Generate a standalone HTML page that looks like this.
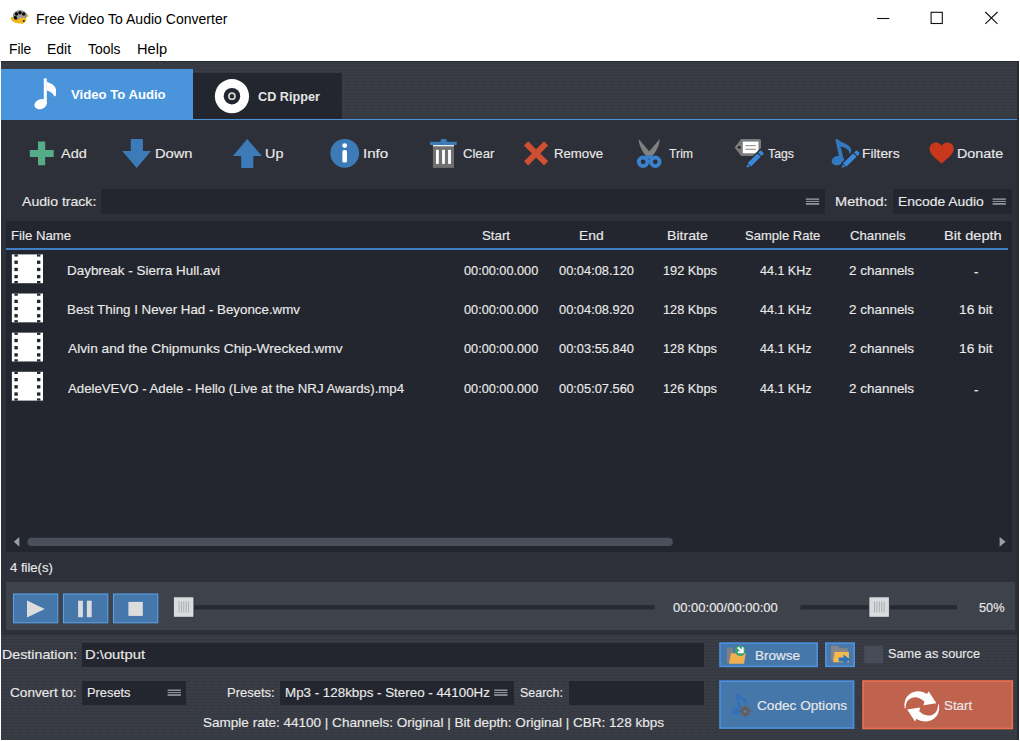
<!DOCTYPE html>
<html><head><meta charset="utf-8"><title>Free Video To Audio Converter</title>
<style>
html,body{margin:0;padding:0;}
body{width:1020px;height:741px;position:relative;overflow:hidden;background:#fff;font-family:"Liberation Sans",sans-serif;}
.a{position:absolute;}
.t{-webkit-text-stroke:0.15px;position:absolute;white-space:pre;line-height:1;transform-origin:0 0;font-family:"Liberation Sans",sans-serif;}
svg{position:absolute;overflow:visible;}
.box{position:absolute;background:#23262e;}
.btn{position:absolute;background:#4577ab;border:1px solid #5a9be0;box-sizing:border-box;}
</style></head><body>
<!-- app dark background with pattern colour -->
<div class="a" id="app" style="left:1px;top:61px;width:1018px;height:678.5px;background:#34373f;"></div>
<svg width="1018" height="679" style="left:1px;top:61px;"><defs><pattern id="wv" width="8" height="3" patternUnits="userSpaceOnUse"><path d="M-1 2.2Q1 2.2 2 1.2T4 0.4T6 1.2T9 2.2" fill="none" stroke="#3c4048" stroke-width="1.1"/></pattern></defs><rect width="1018" height="679" fill="url(#wv)"/><rect width="1018" height="1" fill="#262930"/></svg>
<!-- main panel -->
<div class="a" style="left:1px;top:120px;width:1018px;height:514.5px;background:#2d3038;"></div>
<!-- tabs -->
<div class="a" style="left:1px;top:69px;width:191.5px;height:51px;background:#4a94dc;"></div>
<div class="a" style="left:192.5px;top:73px;width:149.5px;height:46px;background:#23262e;"></div>
<div class="a" style="left:1px;top:119px;width:1018px;height:1.2px;background:#4a94dc;"></div>
<!-- audio track / method boxes -->
<div class="box" style="left:101px;top:189px;width:724px;height:25px;"></div>
<div class="box" style="left:893px;top:189px;width:118.5px;height:25px;"></div>
<!-- list -->
<div class="a" style="left:6px;top:221px;width:1006px;height:331px;background:#23262e;"></div>
<div class="a" style="left:6px;top:248.2px;width:1002px;height:1.8px;background:#3f80c4;"></div>
<!-- player panel -->
<div class="a" style="left:6px;top:581.5px;width:1009px;height:48.7px;background:#3d424b;"></div>
<div class="a" style="left:1016.7px;top:61px;width:2.3px;height:678.5px;background:#292c33;"></div>
<!-- bottom boxes -->
<div class="box" style="left:82px;top:642.5px;width:621.7px;height:24px;"></div>
<div class="box" style="left:82px;top:680.5px;width:104.3px;height:24.3px;"></div>
<div class="box" style="left:279.5px;top:680.5px;width:234px;height:24.3px;"></div>
<div class="box" style="left:568.5px;top:680.5px;width:135.2px;height:24.3px;"></div>
<svg width="1020" height="741" viewBox="0 0 1020 741" style="left:0;top:0;">
<!-- title icon -->
<g>
 <path d="M10.8 17.2 C10.5 21.5 16 24 21.5 23.3 L22 24.3 L26.3 20.8 L22.3 18.6 L22.2 19.8 C18 20.3 13.5 19.5 12 16.5 Z" fill="#f2b81c"/>
 <path d="M26.5 13.5 C28.5 14 29.3 15.5 28.3 17.2 L26.8 16.6 Z" fill="#f6cf55"/>
 <ellipse cx="19.9" cy="15.6" rx="6.9" ry="5" fill="#5e5e5e"/>
 <ellipse cx="19.9" cy="14.8" rx="6.5" ry="4.2" fill="#9c9c9c"/>
 <circle cx="16.5" cy="14" r="1.75" fill="#0a0a0a"/><circle cx="20" cy="12.7" r="1.75" fill="#0a0a0a"/><circle cx="23.7" cy="14" r="1.75" fill="#0a0a0a"/><circle cx="15.4" cy="17.7" r="1.75" fill="#0a0a0a"/>
 <path d="M17 19.5 C19 18, 23 17.3, 26 17.5 L26.3 20.8 L22 24.3 L21.5 23.3 C19 23.3 17.5 22 17 19.5Z" fill="#f2b81c"/>
 <circle cx="23.8" cy="21" r="1.1" fill="#1c2a50"/>
</g>
<!-- window controls -->
<g stroke="#111" stroke-width="1.1" fill="none">
 <path d="M877 18.5H889.3"/>
 <rect x="931.1" y="12.3" width="11.2" height="11.2"/>
 <path d="M985.3 12 L997.5 23.8 M997.5 12 L985.3 23.8"/>
</g>
<!-- tab note -->
<g fill="#fff">
 <rect x="43.8" y="78.3" width="3" height="26" rx="1"/>
 <ellipse cx="40.6" cy="104.2" rx="6.4" ry="4.9" transform="rotate(-22 40.6 104.2)"/>
 <path d="M46.7 81.6 C50 83.6 55 84.6 56 89.5 L56 95 C55.6 96.6 54.4 96.6 53.8 95.4 C52.8 93 50 91.6 46.7 90.6 Z"/>
</g>
<!-- cd icon -->
<circle cx="231.95" cy="96.2" r="17.1" fill="#fff"/>
<circle cx="231.95" cy="96.2" r="8.25" fill="#23262e"/>
<circle cx="231.95" cy="96.2" r="3.05" fill="none" stroke="#d2d2d2" stroke-width="1.7"/>
<!-- plus -->
<path d="M38 141.5h7.2v8.5h8.5v7.1h-8.5v8.2h-7.2v-8.2h-8.2v-7.1h8.2z" fill="#55ad88"/>
<!-- down -->
<path d="M130.8 139H142.9V151H151.1L136.7 168.1L122.2 151H130.8Z" fill="#3d7ab8"/>
<!-- up -->
<path d="M247.2 138.9L261.9 155.9H253.3V168H241.2V155.9H232.9Z" fill="#3d7ab8"/>
<!-- info -->
<circle cx="344.75" cy="153.3" r="14.4" fill="#3d7ab8"/>
<circle cx="344.7" cy="145.6" r="2.4" fill="#fff"/>
<rect x="342.4" y="149.9" width="4.6" height="12.7" rx="1.6" fill="#fff"/>
<!-- trash -->
<g>
 <path d="M440.2 141.8L441.4 139H446L447.2 141.8H456.8V145.1H430V141.8Z" fill="#3d7ab8"/>
 <rect x="432.9" y="145.1" width="21.1" height="1.5" fill="#fff"/>
 <rect x="432.9" y="146.6" width="21.1" height="21.3" fill="#707070"/>
 <rect x="436" y="149.8" width="2.8" height="14.1" fill="#fff"/><rect x="442.1" y="149.8" width="2.8" height="14.1" fill="#fff"/><rect x="448.1" y="149.8" width="2.8" height="14.1" fill="#fff"/>
</g>
<!-- remove X -->
<path transform="translate(536.1 153.4)" d="M-12.1 -7.9L-7.9 -12.1L0 -4.2L7.9 -12.1L12.1 -7.9L4.2 0L12.1 7.9L7.9 12.1L0 4.2L-7.9 12.1L-12.1 7.9L-4.2 0Z" fill="#cf4f32"/>
<!-- scissors -->
<path d="M638.6 139.1C643 144 647 149 649.2 151.5C651.5 149 655.5 144 659.7 139.1C659.5 146 656 152 652.5 155.8H645.8C642.5 152 639 146 638.6 139.1Z" fill="#808080"/>
<circle cx="643.1" cy="161.8" r="4.3" fill="none" stroke="#3a82cc" stroke-width="3.8"/>
<circle cx="655.3" cy="161.8" r="4.3" fill="none" stroke="#3a82cc" stroke-width="3.8"/>
<rect x="646" y="155.2" width="6.4" height="3.5" fill="#3a82cc"/>
<!-- tags -->
<g>
 <path d="M741.1 139.1H759.5Q761 139.1 761 140.6V154.4Q761 155.9 759.5 155.9H741.1L734.6 147.5Z" fill="#7a7a7a"/>
 <circle cx="739.3" cy="147.4" r="1.4" fill="#1d2026"/>
 <rect x="742.8" y="141.6" width="15.7" height="11.7" fill="#fff"/>
 <rect x="745.4" y="145" width="10.5" height="1.2" fill="#9a9a9a"/><rect x="745.4" y="148.7" width="10.5" height="1.2" fill="#9a9a9a"/>
 <g transform="translate(746.5 167.5) rotate(-44.6)">
  <path d="M-0.5 0L3.2 -2.6H22.3V2.6H3.2Z" fill="#2d3038" stroke="#2d3038" stroke-width="2.4"/>
  <path d="M0 0L3.2 -1.8V1.8Z" fill="#3a86d8"/>
  <rect x="4" y="-2.4" width="13.6" height="4.8" fill="#3a86d8"/>
  <path d="M18.7 -2.4H21Q22.4 -2.4 22.4 -1V1Q22.4 2.4 21 2.4H18.7Z" fill="#3a86d8"/>
 </g>
</g>
<!-- filters -->
<g>
 <g fill="#3478c0">
  <ellipse cx="837.9" cy="160.6" rx="6.3" ry="4.6" transform="rotate(-12 837.9 160.6)"/>
  <path d="M835.3 139.6C836 138.7 837.6 138.8 838.4 139.8C841 143 848 143.5 850.6 148C851.8 150.3 851.3 152.6 849.6 154.2C850 150.5 845.5 147.6 840.6 146.6L843.9 160.6L840.2 161.4Z"/>
 </g>
 <g transform="translate(841.7 167.7) rotate(-43.6)">
  <path d="M-0.5 0L3.2 -2.6H23V2.6H3.2Z" fill="#2d3038" stroke="#2d3038" stroke-width="2.4"/>
  <path d="M0 0L3.2 -1.8V1.8Z" fill="#3a86d8"/>
  <rect x="4" y="-2.4" width="14.3" height="4.8" fill="#3a86d8"/>
  <path d="M19.4 -2.4H21.7Q23.1 -2.4 23.1 -1V1Q23.1 2.4 21.7 2.4H19.4Z" fill="#3a86d8"/>
 </g>
</g>
<!-- heart -->
<path d="M941.6 163.4C935 158 929.6 154 929.6 148.8C929.6 145 932.5 142.6 935.8 142.6C938.5 142.6 940.5 144 941.6 145.8C942.7 144 944.7 142.6 947.5 142.6C950.8 142.6 953.7 145 953.7 148.8C953.7 154 948.2 158 941.6 163.4Z" fill="#c9381c"/>
<!-- hamburgers -->
<defs><g id="hb"><rect x="0" y="0" width="13.3" height="1.5"/><rect x="0" y="2.5" width="13.3" height="1.1"/><rect x="0" y="4.6" width="13.3" height="1.8"/></g></defs>
<g fill="#8e929b">
 <use href="#hb" x="805.9" y="198.4"/><use href="#hb" x="992.6" y="198.4"/>
 <use href="#hb" x="167.6" y="689.5"/><use href="#hb" x="494.2" y="689.5"/>
</g>
<!-- film icons -->
<defs><g id="film">
 <rect x="11.9" y="254.4" width="31.1" height="28.8" fill="#fff"/>
 <g fill="#23262e">
  <rect x="14.4" y="254.4" width="3.4" height="2.2"/><rect x="14.4" y="260.6" width="3.4" height="3.3"/><rect x="14.4" y="267.8" width="3.4" height="3.3"/><rect x="14.4" y="275" width="3.4" height="3.3"/><rect x="14.4" y="281" width="3.4" height="2.2"/>
  <rect x="37" y="254.4" width="3.4" height="2.2"/><rect x="37" y="260.6" width="3.4" height="3.3"/><rect x="37" y="267.8" width="3.4" height="3.3"/><rect x="37" y="275" width="3.4" height="3.3"/><rect x="37" y="281" width="3.4" height="2.2"/>
 </g></g></defs>
<use href="#film"/><use href="#film" y="39.13"/><use href="#film" y="78.26"/><use href="#film" y="117.4"/>
<!-- scrollbar -->
<path d="M19.3 536.9V546.7L13.9 541.8Z" fill="#9aa0aa"/>
<path d="M999.6 536.9V546.7L1005.6 541.8Z" fill="#9aa0aa"/>
<rect x="27.5" y="537.8" width="645.3" height="8.2" rx="4.1" fill="#4a505b"/>
<!-- player -->
<g>
 <rect x="13.5" y="594" width="44.3" height="28.8" fill="#4577ab" stroke="#58a0e8" stroke-width="1.1"/>
 <rect x="63.5" y="594" width="44.3" height="28.8" fill="#4577ab" stroke="#58a0e8" stroke-width="1.1"/>
 <rect x="113.5" y="594" width="44.3" height="28.8" fill="#4577ab" stroke="#58a0e8" stroke-width="1.1"/>
 <path d="M27 600.5V617.5L44.8 609Z" fill="#dcdcdc"/>
 <rect x="78.1" y="600.7" width="4.8" height="16.5" fill="#dcdcdc"/><rect x="86.9" y="600.7" width="4.8" height="16.5" fill="#dcdcdc"/>
 <rect x="128.4" y="601.9" width="14.4" height="14" fill="#dcdcdc"/>
 <rect x="190" y="605.2" width="464.8" height="4.2" fill="#272a31"/>
 <rect x="800.5" y="605.2" width="156.5" height="4.2" fill="#272a31"/>
 <g id="thumb">
  <rect x="173.4" y="596.8" width="20.5" height="20.5" rx="1" fill="#d9dcde" stroke="#2a2d34" stroke-width="0.8"/>
  <path d="M179 601.5V612.5M181.4 601.5V612.5M183.8 601.5V612.5M186.2 601.5V612.5M188.6 601.5V612.5" stroke="#a9adb2" stroke-width="1"/>
 </g>
 <use href="#thumb" x="695.5"/>
</g>
<!-- browse / buttons -->
<rect x="720.05" y="643.15" width="97.1" height="23.2" fill="#4577ab" stroke="#4a90dc" stroke-width="1.7"/>
<rect x="825.85" y="643.15" width="28.3" height="23.2" fill="#4a78a8" stroke="#4a90dc" stroke-width="1.7"/>
<rect x="720.05" y="681.15" width="133.5" height="46.9" fill="#4577ab" stroke="#4a90dc" stroke-width="1.7"/>
<rect x="863" y="681" width="149.3" height="47.5" fill="#c0634e" stroke="#ee6e4e" stroke-width="1.6"/>
<rect x="864.2" y="645.8" width="18.8" height="17.6" fill="#474c57"/>
<!-- browse icon -->
<g>
 <path d="M726.6 648.6Q726.6 647.4 727.8 647.4H732.9V663.1H726.6Z" fill="#7b7f86"/>
 <path d="M731 653.3H745.8L744 663.7H728.9Z" fill="#f0b050"/>
 <circle cx="740.2" cy="650.8" r="5.3" fill="#3da070"/>
 <path d="M737.4 648L738.6 646.9L742 650.2V647.6L743.4 647.6V653H738V651.6H740.8Z" fill="#fff" stroke="#fff" stroke-width="0.5"/>
</g>
<!-- open folder icon -->
<g>
 <path d="M831.1 647Q831.1 645.8 832.3 645.8H838L839.8 648.3H847.8V660H831.1Z" fill="#878787"/>
 <path d="M834.7 652H848.9V662.3H832.9Z" fill="#f5b94f"/>
 <path d="M838.7 657.6H843.5V654.6L850.3 659.6L843.5 664.6V661.6H838.7Z" fill="#2f72b8"/>
</g>
<!-- codec icon -->
<g>
 <g fill="#3470b8">
  <ellipse cx="736.8" cy="711.3" rx="4.7" ry="3.4" transform="rotate(-12 736.8 711.3)"/>
  <path d="M735.2 694C735.8 693.2 737 693.3 737.6 694.1C739.5 696.5 744.8 697 746.8 700.3C747.7 702 747.3 703.8 746 705C746.3 702.2 743 700 739.2 699.2L741.4 711L738.6 711.6Z"/>
 </g>
 <circle cx="745.3" cy="711.3" r="3.1" fill="none" stroke="#6b5a52" stroke-width="1.8"/>
 <path d="M745.3 705.6V717M739.6 711.3H751M741.3 707.3L749.3 715.3M749.3 707.3L741.3 715.3" stroke="#6b5a52" stroke-width="1.6" fill="none"/>
 <circle cx="745.3" cy="711.3" r="1.6" fill="#4a7fc0"/>
</g>
<!-- start icon -->
<defs><path id="sw" d="M904.8 708.6C903.8 704 905 699.5 907 696.8C909.5 693.5 913.5 691.5 917.6 691.3C921 691.2 924.5 692.4 927.1 694.1L928.6 691.2L936.4 703.3L923.4 705.2L924.4 701.5C922 699.3 919 697.4 915.8 697.2C912.5 697.1 909.8 698.5 907.8 700.6C906.3 702.5 905.6 705.5 905.5 708.6Z"/></defs>
<use href="#sw" fill="#fff"/>
<use href="#sw" fill="#fff" transform="rotate(180 921.8 706.4)"/>
</svg>

<span class="t" style="left:35.60px;top:11.0px;font-size:15px;transform:scaleX(0.9356);color:#000;-webkit-text-stroke:0;">Free Video To Audio Converter</span>
<span class="t" style="left:9.00px;top:41.0px;font-size:15px;transform:scaleX(0.9197);color:#000;-webkit-text-stroke:0;">File</span>
<span class="t" style="left:47.20px;top:41.0px;font-size:15px;transform:scaleX(0.9299);color:#000;-webkit-text-stroke:0;">Edit</span>
<span class="t" style="left:88.00px;top:41.0px;font-size:15px;transform:scaleX(0.9280);color:#000;-webkit-text-stroke:0;">Tools</span>
<span class="t" style="left:137.00px;top:41.0px;font-size:15px;transform:scaleX(0.9733);color:#000;-webkit-text-stroke:0;">Help</span>
<span class="t" style="left:71.00px;top:88.0px;font-size:13px;transform:scaleX(1.0103);color:#fff;font-weight:700;-webkit-text-stroke:0;">Video To Audio</span>
<span class="t" style="left:258.00px;top:90.0px;font-size:13px;transform:scaleX(0.9754);color:#e4e4e4;font-weight:700;-webkit-text-stroke:0;">CD Ripper</span>
<span class="t" style="left:60.80px;top:146.8px;font-size:13.4px;transform:scaleX(1.0798);color:#e9e9e9;">Add</span>
<span class="t" style="left:155.00px;top:146.8px;font-size:13.4px;transform:scaleX(1.0963);color:#e9e9e9;">Down</span>
<span class="t" style="left:265.40px;top:146.8px;font-size:13.4px;transform:scaleX(1.0735);color:#e9e9e9;">Up</span>
<span class="t" style="left:363.00px;top:146.8px;font-size:13.4px;transform:scaleX(1.1262);color:#e9e9e9;">Info</span>
<span class="t" style="left:463.20px;top:146.8px;font-size:13.4px;transform:scaleX(0.9782);color:#e9e9e9;">Clear</span>
<span class="t" style="left:554.40px;top:146.8px;font-size:13.4px;transform:scaleX(0.9851);color:#e9e9e9;">Remove</span>
<span class="t" style="left:668.60px;top:146.8px;font-size:13.4px;transform:scaleX(0.9176);color:#e9e9e9;">Trim</span>
<span class="t" style="left:768.20px;top:146.8px;font-size:13.4px;transform:scaleX(0.9158);color:#e9e9e9;">Tags</span>
<span class="t" style="left:861.80px;top:146.8px;font-size:13.4px;transform:scaleX(1.0301);color:#e9e9e9;">Filters</span>
<span class="t" style="left:957.00px;top:146.8px;font-size:13.4px;transform:scaleX(1.0682);color:#e9e9e9;">Donate</span>
<span class="t" style="left:22.20px;top:194.8px;font-size:13.4px;transform:scaleX(1.0509);color:#e9e9e9;">Audio track:</span>
<span class="t" style="left:834.80px;top:194.8px;font-size:13.4px;transform:scaleX(1.0886);color:#e9e9e9;">Method:</span>
<span class="t" style="left:897.80px;top:194.8px;font-size:13.4px;transform:scaleX(1.0382);color:#e9e9e9;">Encode Audio</span>
<span class="t" style="left:10.80px;top:228.8px;font-size:13.4px;transform:scaleX(0.9852);color:#e9e9e9;">File Name</span>
<span class="t" style="left:481.80px;top:228.8px;font-size:13.4px;transform:scaleX(0.9913);color:#e9e9e9;">Start</span>
<span class="t" style="left:579.40px;top:228.8px;font-size:13.4px;transform:scaleX(1.0357);color:#e9e9e9;">End</span>
<span class="t" style="left:666.60px;top:228.8px;font-size:13.4px;transform:scaleX(1.0549);color:#e9e9e9;">Bitrate</span>
<span class="t" style="left:744.60px;top:228.8px;font-size:13.4px;transform:scaleX(0.9728);color:#e9e9e9;">Sample Rate</span>
<span class="t" style="left:849.60px;top:228.8px;font-size:13.4px;transform:scaleX(0.9845);color:#e9e9e9;">Channels</span>
<span class="t" style="left:943.60px;top:228.8px;font-size:13.4px;transform:scaleX(1.0924);color:#e9e9e9;">Bit depth</span>
<span class="t" style="left:9.80px;top:560.8px;font-size:13.4px;transform:scaleX(0.9750);color:#e9e9e9;">4 file(s)</span>
<span class="t" style="left:673.20px;top:600.8px;font-size:13.4px;transform:scaleX(0.9707);color:#e9e9e9;">00:00:00/00:00:00</span>
<span class="t" style="left:979.40px;top:600.8px;font-size:13.4px;transform:scaleX(0.9550);color:#e9e9e9;">50%</span>
<span class="t" style="left:2.00px;top:647.8px;font-size:13.4px;transform:scaleX(1.0639);color:#e9e9e9;">Destination:</span>
<span class="t" style="left:85.00px;top:647.8px;font-size:13.4px;transform:scaleX(1.1041);color:#e9e9e9;">D:\output</span>
<span class="t" style="left:9.80px;top:685.8px;font-size:13.4px;transform:scaleX(1.0168);color:#e9e9e9;">Convert to:</span>
<span class="t" style="left:87.00px;top:685.8px;font-size:13.4px;transform:scaleX(0.9584);color:#e9e9e9;">Presets</span>
<span class="t" style="left:227.40px;top:685.8px;font-size:13.4px;transform:scaleX(0.9684);color:#e9e9e9;">Presets:</span>
<span class="t" style="left:284.80px;top:685.8px;font-size:13.4px;transform:scaleX(0.9974);color:#e9e9e9;">Mp3 - 128kbps - Stereo - 44100Hz</span>
<span class="t" style="left:519.80px;top:685.8px;font-size:13.4px;transform:scaleX(0.9296);color:#e9e9e9;">Search:</span>
<span class="t" style="left:202.80px;top:715.8px;font-size:13.4px;transform:scaleX(1.0103);color:#e9e9e9;">Sample rate: 44100 | Channels: Original | Bit depth: Original | CBR: 128 kbps</span>
<span class="t" style="left:755.20px;top:648.8px;font-size:13.4px;transform:scaleX(1.0082);color:#e9e9e9;">Browse</span>
<span class="t" style="left:887.80px;top:646.8px;font-size:13.4px;transform:scaleX(0.9508);color:#e9e9e9;">Same as source</span>
<span class="t" style="left:757.40px;top:698.8px;font-size:13.4px;transform:scaleX(1.0172);color:#e9e9e9;">Codec Options</span>
<span class="t" style="left:944.40px;top:698.8px;font-size:13.4px;transform:scaleX(0.9978);color:#e9e9e9;">Start</span>
<span class="t" style="left:67.00px;top:263.8px;font-size:13.4px;transform:scaleX(1.0036);color:#e9e9e9;">Daybreak - Sierra Hull.avi</span>
<span class="t" style="left:464.40px;top:263.8px;font-size:13.4px;transform:scaleX(0.9490);color:#e9e9e9;">00:00:00.000</span>
<span class="t" style="left:559.40px;top:263.8px;font-size:13.4px;transform:scaleX(0.9592);color:#e9e9e9;">00:04:08.120</span>
<span class="t" style="left:663.40px;top:263.8px;font-size:13.4px;transform:scaleX(0.9528);color:#e9e9e9;">192 Kbps</span>
<span class="t" style="left:760.40px;top:263.8px;font-size:13.4px;transform:scaleX(0.9349);color:#e9e9e9;">44.1 KHz</span>
<span class="t" style="left:849.20px;top:263.8px;font-size:13.4px;transform:scaleX(1.0050);color:#e9e9e9;">2 channels</span>
<span class="t" style="left:974.20px;top:264.8px;font-size:13.4px;transform:scaleX(0.9748);color:#e9e9e9;">-</span>
<span class="t" style="left:67.00px;top:302.8px;font-size:13.4px;transform:scaleX(0.9949);color:#e9e9e9;">Best Thing I Never Had - Beyonce.wmv</span>
<span class="t" style="left:464.40px;top:302.8px;font-size:13.4px;transform:scaleX(0.9490);color:#e9e9e9;">00:00:00.000</span>
<span class="t" style="left:559.40px;top:302.8px;font-size:13.4px;transform:scaleX(0.9592);color:#e9e9e9;">00:04:08.920</span>
<span class="t" style="left:663.40px;top:302.8px;font-size:13.4px;transform:scaleX(0.9528);color:#e9e9e9;">128 Kbps</span>
<span class="t" style="left:760.40px;top:302.8px;font-size:13.4px;transform:scaleX(0.9349);color:#e9e9e9;">44.1 KHz</span>
<span class="t" style="left:849.20px;top:302.8px;font-size:13.4px;transform:scaleX(1.0050);color:#e9e9e9;">2 channels</span>
<span class="t" style="left:959.20px;top:302.8px;font-size:13.4px;transform:scaleX(1.0256);color:#e9e9e9;">16 bit</span>
<span class="t" style="left:68.00px;top:341.8px;font-size:13.4px;transform:scaleX(1.0255);color:#e9e9e9;">Alvin and the Chipmunks Chip-Wrecked.wmv</span>
<span class="t" style="left:464.40px;top:341.8px;font-size:13.4px;transform:scaleX(0.9490);color:#e9e9e9;">00:00:00.000</span>
<span class="t" style="left:559.40px;top:341.8px;font-size:13.4px;transform:scaleX(0.9592);color:#e9e9e9;">00:03:55.840</span>
<span class="t" style="left:663.40px;top:341.8px;font-size:13.4px;transform:scaleX(0.9528);color:#e9e9e9;">128 Kbps</span>
<span class="t" style="left:760.40px;top:341.8px;font-size:13.4px;transform:scaleX(0.9349);color:#e9e9e9;">44.1 KHz</span>
<span class="t" style="left:849.20px;top:341.8px;font-size:13.4px;transform:scaleX(1.0050);color:#e9e9e9;">2 channels</span>
<span class="t" style="left:959.20px;top:341.8px;font-size:13.4px;transform:scaleX(1.0256);color:#e9e9e9;">16 bit</span>
<span class="t" style="left:68.00px;top:381.8px;font-size:13.4px;transform:scaleX(0.9864);color:#e9e9e9;">AdeleVEVO - Adele - Hello (Live at the NRJ Awards).mp4</span>
<span class="t" style="left:464.40px;top:381.8px;font-size:13.4px;transform:scaleX(0.9490);color:#e9e9e9;">00:00:00.000</span>
<span class="t" style="left:559.40px;top:381.8px;font-size:13.4px;transform:scaleX(0.9592);color:#e9e9e9;">00:05:07.560</span>
<span class="t" style="left:663.40px;top:381.8px;font-size:13.4px;transform:scaleX(0.9528);color:#e9e9e9;">126 Kbps</span>
<span class="t" style="left:760.40px;top:381.8px;font-size:13.4px;transform:scaleX(0.9349);color:#e9e9e9;">44.1 KHz</span>
<span class="t" style="left:849.20px;top:381.8px;font-size:13.4px;transform:scaleX(1.0050);color:#e9e9e9;">2 channels</span>
<span class="t" style="left:974.20px;top:382.8px;font-size:13.4px;transform:scaleX(0.9748);color:#e9e9e9;">-</span>
</body></html>
